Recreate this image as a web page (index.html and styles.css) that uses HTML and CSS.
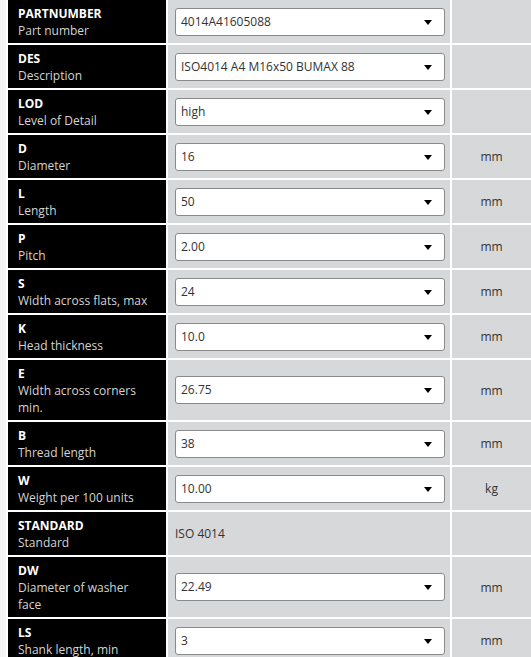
FILE: index.html
```html
<!DOCTYPE html>
<html lang="en">
<head>
<meta charset="UTF-8">
<title>ISO 4014 parameters</title>
<link rel="stylesheet" href="styles.css">
</head>
<body>

<table class="params">
 <tr>
  <th><b>PARTNUMBER</b><span>Part number</span></th>
  <td class="val"><div class="sel">4014A41605088</div></td>
  <td class="unit"></td>
 </tr>
 <tr>
  <th><b>DES</b><span>Description</span></th>
  <td class="val"><div class="sel">ISO4014 A4 M16x50 BUMAX 88</div></td>
  <td class="unit"></td>
 </tr>
 <tr>
  <th><b>LOD</b><span>Level of Detail</span></th>
  <td class="val"><div class="sel">high</div></td>
  <td class="unit"></td>
 </tr>
 <tr>
  <th><b>D</b><span>Diameter</span></th>
  <td class="val"><div class="sel">16</div></td>
  <td class="unit">mm</td>
 </tr>
 <tr>
  <th><b>L</b><span>Length</span></th>
  <td class="val"><div class="sel">50</div></td>
  <td class="unit">mm</td>
 </tr>
 <tr>
  <th><b>P</b><span>Pitch</span></th>
  <td class="val"><div class="sel">2.00</div></td>
  <td class="unit">mm</td>
 </tr>
 <tr>
  <th><b>S</b><span>Width across flats, max</span></th>
  <td class="val"><div class="sel">24</div></td>
  <td class="unit">mm</td>
 </tr>
 <tr>
  <th><b>K</b><span>Head thickness</span></th>
  <td class="val"><div class="sel">10.0</div></td>
  <td class="unit">mm</td>
 </tr>
 <tr>
  <th><b>E</b><span>Width across corners min.</span></th>
  <td class="val"><div class="sel">26.75</div></td>
  <td class="unit">mm</td>
 </tr>
 <tr>
  <th><b>B</b><span>Thread length</span></th>
  <td class="val"><div class="sel">38</div></td>
  <td class="unit">mm</td>
 </tr>
 <tr>
  <th><b>W</b><span>Weight per 100 units</span></th>
  <td class="val"><div class="sel">10.00</div></td>
  <td class="unit">kg</td>
 </tr>
 <tr>
  <th><b>STANDARD</b><span>Standard</span></th>
  <td class="val"><div class="plain">ISO 4014</div></td>
  <td class="unit"></td>
 </tr>
 <tr>
  <th><b>DW</b><span>Diameter of washer face</span></th>
  <td class="val"><div class="sel">22.49</div></td>
  <td class="unit">mm</td>
 </tr>
 <tr>
  <th><b>LS</b><span>Shank length, min</span></th>
  <td class="val"><div class="sel">3</div></td>
  <td class="unit">mm</td>
 </tr>
</table>

</body>
</html>
```

FILE: styles.css
```css
body{
 margin:0;
 background:#f4f4f4;
 font-family:"Open Sans", Arial, sans-serif;
 font-size:12px;
 color:#333;
 overflow:hidden;
}

/* PARAMETER TABLE */
.params{
 margin:-2px 0 0 6px;
 width:527px;
 border-collapse:separate;
 border-spacing:2px;
 background:#fff;
 table-layout:fixed;
}

.params th{
 width:132px;
 padding:5px 16px 4px 10px;
 background:#000;
 text-align:left;
 vertical-align:top;
 font-weight:normal;
 line-height:17px;
}
.params th b{
 display:block;
 color:#fff;
 font-weight:bold;
}
.params th span{
 display:block;
 color:#d4d4d4;
}

.params .val{
 width:270px;
 padding:0 5px 0 7px;
 background:#d7d8da;
 vertical-align:middle;
}

.params .unit{
 background:#d7d8da;
 text-align:center;
 vertical-align:middle;
}

/* FAKE SELECT BOX */
.sel{
 position:relative;
 height:26px;
 line-height:26px;
 padding:0 5px;
 background:#fff;
 border:1px solid #8a8a8a;
 border-radius:3px;
}
.sel::after{
 content:"";
 position:absolute;
 right:12px;
 top:11px;
 border-left:4px solid transparent;
 border-right:4px solid transparent;
 border-top:5px solid #000;
}

.plain{
 padding-left:0;
}
```
